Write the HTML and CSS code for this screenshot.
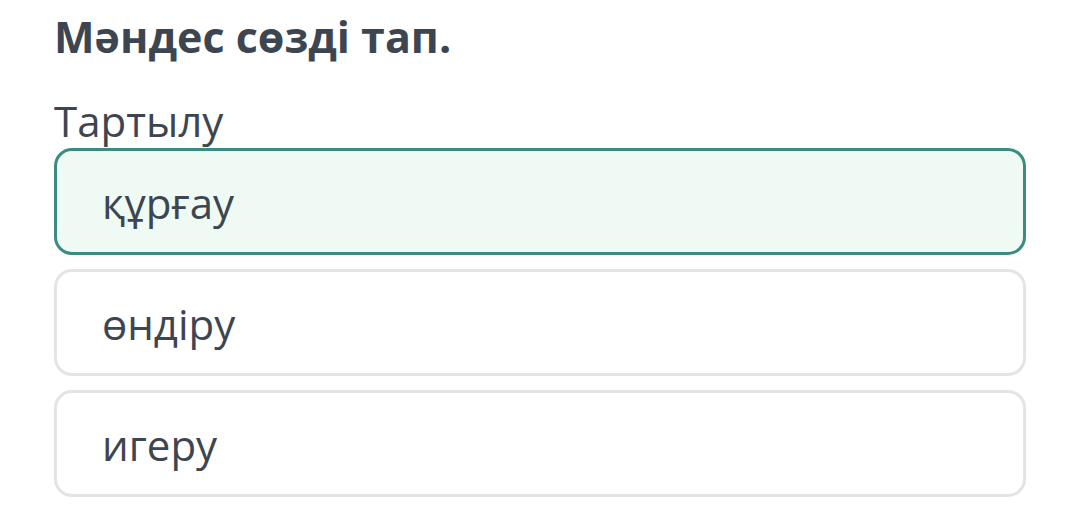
FILE: index.html
```html
<!DOCTYPE html>
<html>
<head>
    <meta charset="UTF-8">
    <title>Мәндес сөзді тап</title>
    <link rel="stylesheet" href="styles.css">
</head>
<body>
    <!-- Question header -->
    <h1 class="question">Мәндес сөзді тап.</h1>
    <div class="word">Тартылу</div>

    <!-- Answer options -->
    <div class="options">
        <div class="option selected">құрғау</div>
        <div class="option">өндіру</div>
        <div class="option">игеру</div>
    </div>
</body>
</html>
```

FILE: styles.css
```css
body {
    font-family: "Open Sans", sans-serif;
    margin: 0;
    padding: 0 54px;
    background-color: #fff;
    color: #3d4650;
}
/* Question title and the given word */
.question {
    font-size: 43px;
    font-weight: 700;
    margin: 0;
    padding-top: 10px;
    line-height: 54px;
}

.word {
    font-size: 42px;
    line-height: 50px;
    margin-top: 32px;
}
/* Option cards */
.options {
    display: flex;
    flex-direction: column;
    gap: 14px;
    width: 972px;
    margin-top: 2px;
}

.option {
    box-sizing: border-box;
    height: 107px;
    border: 3px solid #e2e4e5;
    border-radius: 18px;
    padding: 2px 0 0 45px;
    font-size: 42px;
    display: flex;
    align-items: center;
}

    .option.selected {
        border-color: #3a8c80;
        background-color: #effaf5;
    }
```
